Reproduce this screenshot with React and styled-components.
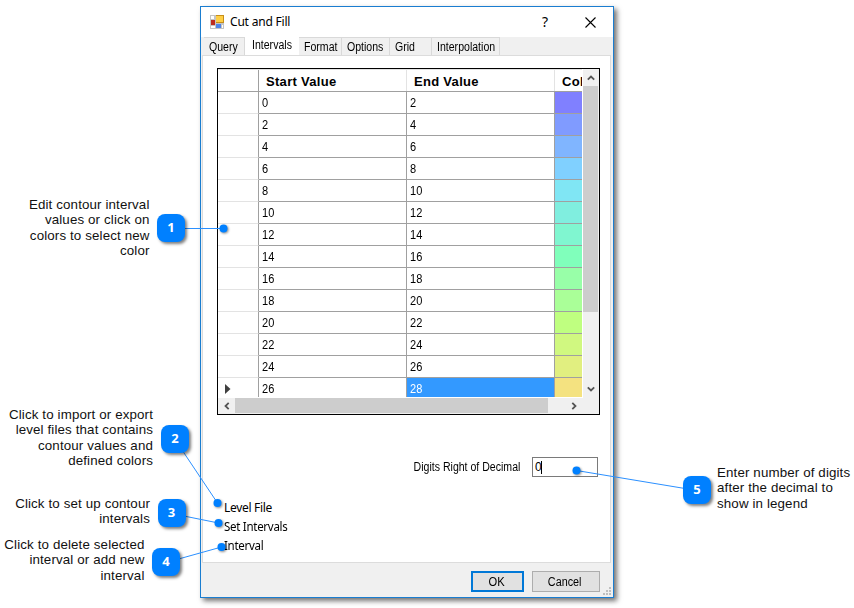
import React from "react"
import styled, { createGlobalStyle } from "styled-components"

const GlobalStyle = createGlobalStyle`
  * {
    box-sizing: border-box;
  }

  body {
    margin: 0;
    background: #ffffff;
    overflow: hidden;
  }
`

const Page = styled.div`
  position: relative;
  width: 854px;
  height: 608px;
  padding: 6px 0 0 200px;
  color: #000000;
  font-family: "Liberation Sans", sans-serif;
  font-size: 12px;
`

const Dialog = styled.div`
  display: flex;
  flex-direction: column;
  width: 414px;
  height: 592px;
  border: 1px solid #1a7dd0;
  background: #f0f0f0;
  box-shadow: 3px 3px 5px rgba(0, 0, 0, 0.55);
`

const Condensed = styled.span`
  display: inline-block;
  transform: scaleX(${props => props.$scale || 0.88});
  transform-origin: ${props => props.$origin || "left"} center;
`

const TitleBar = styled.div`
  display: flex;
  align-items: center;
  height: 30px;
  padding: 0 17px 0 9px;
  background: #ffffff;
`

const Title = styled.div`
  flex: 1;
  margin-left: 6px;
  padding-bottom: 1px;
  font-family: "Noto Sans", sans-serif;
  font-size: 12px;
  letter-spacing: -0.2px;
`

const Help = styled.div`
  margin-right: 37px;
  padding-bottom: 2px;
  font-family: "Noto Sans", sans-serif;
  font-size: 14px;
`

const Tabs = styled.div`
  display: flex;
  align-items: flex-end;
  height: 18px;
  padding-left: 3px;
`

const Tab = styled.div`
  flex: none;
  width: ${props => props.$width}px;
  height: ${props => (props.$active ? 20 : 18)}px;
  padding: ${props => (props.$active ? "3px 0 0 7px" : "2px 0 0 5px")};
  border: solid #d9d9d9;
  border-width: ${props => (props.$active ? "0" : "1px 1px 0 0")};
  background: ${props => (props.$active ? "#ffffff" : "#f0f0f0")};
  line-height: 15px;
  white-space: nowrap;
`

const Panel = styled.div`
  width: 409px;
  height: 508px;
  margin-left: 1px;
  padding: 12px 0 0 14px;
  border: 1px solid #dcdcdc;
  background: #ffffff;
`

const GridBox = styled.div`
  display: grid;
  grid-template-columns: 365px 16px;
  grid-template-rows: 329px 16px;
  width: 383px;
  height: 347px;
  border: 1px solid #000000;
  background: #f0f0f0;
`

const Table = styled.div`
  overflow: hidden;
  border: solid #ffffff;
  border-width: 0 1px 1px 0;
  background: #ffffff;
`

const HeadRow = styled.div`
  display: grid;
  grid-template-columns: 41px 148px 148px 27px;
  height: 23px;
  border-top: 1px solid #e3e3e3;
  border-bottom: 1px solid #a0a0a0;
  font-size: 13px;
  font-weight: bold;
  line-height: 24px;
  letter-spacing: 0.3px;
`

const HeadCell = styled.div`
  height: 21px;
  padding-left: 7px;
  border-right: ${props => (props.$last ? "0" : "1px")} solid ${props => props.$line || "#e3e3e3"};
  white-space: nowrap;
`

const Row = styled.div`
  display: grid;
  grid-template-columns: 41px 148px 148px 27px;
  grid-template-rows: 22px;
  height: 22px;
  line-height: 23px;
`

const RowHead = styled.div`
  padding: 6px 0 0 7px;
  border: solid #a0a0a0;
  border-width: 0 1px 1px 0;
  border-bottom-color: #e3e3e3;
  line-height: 0;
`

const Cell = styled.div`
  padding-left: 3px;
  border: solid #a0a0a0;
  border-width: 0 1px 1px 0;
  background: ${props => (props.$selected ? "#3399ff" : "#ffffff")};
  color: ${props => (props.$selected ? "#ffffff" : "#000000")};
`

const Swatch = styled.div`
  border-bottom: 1px solid #a0a0a0;
  background: ${props => props.$color};
`

const VScroll = styled.div`
  display: flex;
  flex-direction: column;
  padding-right: 1px;
`

const HScroll = styled.div`
  display: flex;
  padding-bottom: 1px;
`

const ScrollButton = styled.div`
  display: flex;
  flex: none;
  align-items: center;
  justify-content: center;
  width: ${props => props.$width || 15}px;
  height: ${props => props.$height || 16}px;
`

const VThumb = styled.div`
  height: 226px;
  margin-bottom: 68px;
  background: #cdcdcd;
`

const HThumb = styled.div`
  flex: none;
  width: 313px;
  height: 15px;
  background: #cdcdcd;
`

const DigitsRow = styled.div`
  display: flex;
  align-items: center;
  justify-content: flex-end;
  margin: 42px 12px 0 0;
`

const Input = styled.div`
  display: flex;
  width: 66px;
  height: 20px;
  margin-left: 12px;
  padding: 3px 0 0 2px;
  border: 1px solid #7a7a7a;
  line-height: 13px;
`

const Caret = styled.span`
  width: 1px;
  height: 13px;
  margin-left: -1px;
  background: #000000;
`

const MenuLabels = styled.div`
  margin: 21px 0 0 7px;
  font-family: "Noto Sans", sans-serif;
  font-size: 12px;
  line-height: 19px;
  letter-spacing: -0.3px;
`

const Footer = styled.div`
  display: flex;
  position: relative;
  height: 34px;
  padding: 8px 13px 0 0;
  justify-content: flex-end;
  gap: 8px;
`

const Button = styled.div`
  width: ${props => props.$width}px;
  height: 21px;
  padding-right: 2px;
  border: ${props => (props.$primary ? "2px solid #0078d7" : "1px solid #adadad")};
  background: #e1e1e1;
  line-height: ${props => (props.$primary ? 18 : 20)}px;
  text-align: center;
`

const Grip = styled.svg`
  position: absolute;
  right: 2px;
  bottom: 2px;
`

const Leaders = styled.svg`
  position: absolute;
  left: 0;
  top: 0;
  overflow: visible;
`

const Badge = styled.div`
  position: absolute;
  left: ${props => props.$x}px;
  top: ${props => props.$y}px;
  width: 28px;
  height: 28px;
  border-radius: 8px;
  background: #0080ff;
  box-shadow: 2px 2px 3px rgba(0, 0, 0, 0.5);
  color: #ffffff;
  font-family: "Noto Sans", sans-serif;
  font-size: 13px;
  font-weight: bold;
  line-height: 27px;
  text-align: center;
`

const Note = styled.div`
  position: absolute;
  left: ${props => props.$x}px;
  top: ${props => props.$y}px;
  width: 150px;
  color: #111111;
  font-size: 13.33px;
  line-height: 15.4px;
  letter-spacing: 0.13px;
  text-align: ${props => props.$align || "right"};
  white-space: pre;
`

const tabs = [
  { label: "Query", width: 41 },
  { label: "Intervals", width: 54, active: true },
  { label: "Format", width: 43 },
  { label: "Options", width: 48 },
  { label: "Grid", width: 42 },
  { label: "Interpolation", width: 68 },
]

const colors = [
  "#8080ff", "#809bff", "#80b5ff", "#80d0ff", "#80e6f4", "#80eedf", "#80f6d0",
  "#80ffbb", "#98ffa8", "#aaff98", "#bfff80", "#d0f880", "#e1ef80", "#f4e280",
]

const callouts = [
  { x: 157, y: 214, dot: [223.5, 228.5], noteX: -0.5, noteY: 197, text: "Edit contour interval\nvalues or click on\ncolors to select new\ncolor" },
  { x: 161, y: 425, dot: [217.5, 503], noteX: 3, noteY: 407, text: "Click to import or export\nlevel files that contains\ncontour values and\ndefined colors" },
  { x: 157.5, y: 499, dot: [218.5, 523], noteX: 0, noteY: 496, text: "Click to set up contour\nintervals" },
  { x: 152, y: 548, dot: [221.5, 547], noteX: -5.5, noteY: 537, text: "Click to delete selected\ninterval or add new\ninterval" },
  { x: 683, y: 476, dot: [576.5, 470.5], noteX: 717, noteY: 465, align: "left", text: "Enter number of digits\nafter the decimal to\nshow in legend" },
]

const AppIcon = () => (
  <svg width="14" height="14" shapeRendering="crispEdges">
    <rect width="14" height="14" fill="#c4c4c4" />
    <path d="M1 1h3v3H1zM1 11h4v2H1zM12 10h1v3h-1z" fill="#ffffff" />
    <rect x="6" y="0" width="8" height="8" fill="#c78f1a" />
    <rect x="6" y="1" width="7" height="6" fill="#ffcf45" />
    <rect x="1" y="5" width="4" height="5" fill="#bd2c20" />
    <rect x="6" y="9" width="5" height="4" fill="#4d83e8" />
  </svg>
)

const CloseIcon = () => (
  <svg width="11" height="11">
    <path d="M0.5 0.5l10 10M10.5 0.5l-10 10" stroke="#000000" strokeWidth="1.1" />
  </svg>
)

const Chevron = ({ turn }) => (
  <svg width="8" height="8" style={{ transform: `rotate(${turn}deg)` }}>
    <path d="M0.8 5.7L4 2.5l3.2 3.2" fill="none" stroke="#555555" strokeWidth="1.8" />
  </svg>
)

const App = () => (
  <Page>
    <GlobalStyle />
    <Dialog>
      <TitleBar>
        <AppIcon />
        <Title>Cut and Fill</Title>
        <Help>?</Help>
        <CloseIcon />
      </TitleBar>
      <Tabs>
        {tabs.map(tab => (
          <Tab key={tab.label} $width={tab.width} $active={tab.active}>
            <Condensed>{tab.label}</Condensed>
          </Tab>
        ))}
      </Tabs>
      <Panel>
        <GridBox>
          <Table>
            <HeadRow>
              <HeadCell $line="#a0a0a0" />
              <HeadCell>Start Value</HeadCell>
              <HeadCell>End Value</HeadCell>
              <HeadCell $last>Col</HeadCell>
            </HeadRow>
            {colors.map((color, id) => {
              const last = id === colors.length - 1
              return (
                <Row key={color}>
                  <RowHead>
                    {last && (
                      <svg width="6" height="10">
                        <path d="M0 0l5.5 5L0 10z" fill="#404040" />
                      </svg>
                    )}
                  </RowHead>
                  <Cell><Condensed $scale={0.92}>{id * 2}</Condensed></Cell>
                  <Cell $selected={last}><Condensed $scale={0.92}>{id * 2 + 2}</Condensed></Cell>
                  <Swatch $color={color} />
                </Row>
              )
            })}
          </Table>
          <VScroll>
            <ScrollButton $height={17}><Chevron turn={0} /></ScrollButton>
            <VThumb />
            <ScrollButton $height={17}><Chevron turn={180} /></ScrollButton>
          </VScroll>
          <HScroll>
            <ScrollButton $width={17}><Chevron turn={-90} /></ScrollButton>
            <HThumb />
            <ScrollButton $width={51}><Chevron turn={90} /></ScrollButton>
          </HScroll>
        </GridBox>
        <DigitsRow>
          <Condensed $origin="right">Digits Right of Decimal</Condensed>
          <Input>0<Caret /></Input>
        </DigitsRow>
        <MenuLabels>
          <div>Level File</div>
          <div><Condensed $scale={0.96}>Set Intervals</Condensed></div>
          <div><Condensed $scale={0.96}>Interval</Condensed></div>
        </MenuLabels>
      </Panel>
      <Footer>
        <Button $width={53} $primary><Condensed $origin="center" $scale={0.93}>OK</Condensed></Button>
        <Button $width={68}><Condensed $origin="center" $scale={0.9}>Cancel</Condensed></Button>
        <Grip width="8" height="8" fill="#bfbfbf">
          <path d="M6 0h2v2H6zM3 3h2v2H3zM6 3h2v2H6zM0 6h2v2H0zM3 6h2v2H3zM6 6h2v2H6z" />
        </Grip>
      </Footer>
    </Dialog>
    <Leaders width="854" height="608">
      {callouts.map(({ x, y, dot }) => (
        <g key={y}>
          <line x1={x + 14} y1={y + 14.5} x2={dot[0]} y2={dot[1]} stroke="#2b90ff" />
          <circle
            cx={dot[0]}
            cy={dot[1]}
            r="4"
            fill="#0080ff"
            style={{ filter: "drop-shadow(1px 1px 1px rgba(0, 0, 0, 0.45))" }}
          />
        </g>
      ))}
    </Leaders>
    {callouts.map((item, id) => (
      <React.Fragment key={id}>
        <Badge $x={item.x} $y={item.y}>{id + 1}</Badge>
        <Note $x={item.noteX} $y={item.noteY} $align={item.align}>{item.text}</Note>
      </React.Fragment>
    ))}
  </Page>
)

export default App
